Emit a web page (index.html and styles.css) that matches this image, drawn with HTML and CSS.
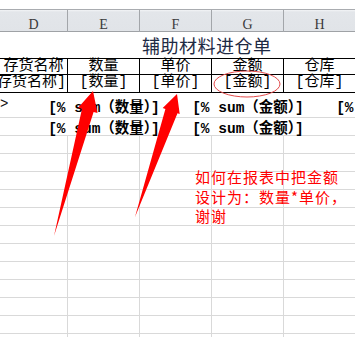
FILE: index.html
```html
<!DOCTYPE html>
<html lang="zh">
<head>
<meta charset="utf-8">
<title>辅助材料进仓单</title>
<link rel="stylesheet" href="styles.css">
</head>
<body>
<div class="sheet">
  <div class="topbar"></div>
  <div class="colhead">
    <div class="ch">D</div><div class="ch">E</div><div class="ch">F</div><div class="ch">G</div><div class="ch last">H</div>
  </div>
  <div class="title"><span class="title-text">辅助材料进仓单</span></div>
  <div class="trow r1">
    <div class="tc">存货名称</div><div class="tc">数量</div><div class="tc">单价</div><div class="tc">金额</div><div class="tc last">仓库</div>
  </div>
  <div class="trow r2">
    <div class="tc right">[存货名称]</div><div class="tc">[数量]</div><div class="tc">[单价]</div><div class="tc">[金额]</div><div class="tc last">[仓库]</div>
  </div>
  <div class="srow s1">
    <div class="gt">&gt;</div>
    <div class="sbox">[% sum（数量）]</div>
    <div class="sbox">[% sum（金额）]</div>
    <div class="sbox">[% sum（数量）]</div>
  </div>
  <div class="srow s2">
    <div class="gt"></div>
    <div class="sbox">[% sum（数量）]</div>
    <div class="sbox">[% sum（金额）]</div>
  </div>
  <div class="grow"><div class="gc"></div><div class="gc"></div><div class="gc"></div><div class="gc"></div><div class="gc last"></div></div>
  <div class="grow"><div class="gc"></div><div class="gc"></div><div class="gc"></div><div class="gc"></div><div class="gc last"></div></div>
  <div class="grow"><div class="gc"></div><div class="gc"></div><div class="gc"></div><div class="gc"></div><div class="gc last"></div></div>
  <div class="grow"><div class="gc"></div><div class="gc"></div><div class="gc"></div><div class="gc"></div><div class="gc last"></div></div>
  <div class="grow"><div class="gc"></div><div class="gc"></div><div class="gc"></div><div class="gc"></div><div class="gc last"></div></div>
  <div class="grow"><div class="gc"></div><div class="gc"></div><div class="gc"></div><div class="gc"></div><div class="gc last"></div></div>
  <div class="grow"><div class="gc"></div><div class="gc"></div><div class="gc"></div><div class="gc"></div><div class="gc last"></div></div>
  <div class="grow"><div class="gc"></div><div class="gc"></div><div class="gc"></div><div class="gc"></div><div class="gc last"></div></div>
  <div class="grow"><div class="gc"></div><div class="gc"></div><div class="gc"></div><div class="gc"></div><div class="gc last"></div></div>
  <div class="grow"><div class="gc"></div><div class="gc"></div><div class="gc"></div><div class="gc"></div><div class="gc last"></div></div>
  <div class="grow"><div class="gc"></div><div class="gc"></div><div class="gc"></div><div class="gc"></div><div class="gc last"></div></div>
  <div class="grow"><div class="gc"></div><div class="gc"></div><div class="gc"></div><div class="gc"></div><div class="gc last"></div></div>

  <svg class="marks" width="355" height="337" viewBox="0 0 355 337" xmlns="http://www.w3.org/2000/svg">
    <ellipse cx="247" cy="84" rx="33" ry="13" fill="none" stroke="#e24a4a" stroke-width="1"/>
    <polygon fill="#ff0000" points="54,236 82,108.7 78.1,107.7 93,91 97.5,112.9 93.6,111.9"/>
    <polygon fill="#ff0000" points="135,217 165.4,109 162.7,108.1 177,94 179.7,113.9 177.5,113.2"/>
  </svg>
  <div class="note">如何在报表中把金额<br>设计为：数量*单价，<br>谢谢</div>
</div>
</body>
</html>
```
FILE: styles.css
```css
html, body {
  margin: 0;
  padding: 0;
  background: #ffffff;
}
.sheet {
  position: relative;
  width: 355px;
  height: 337px;
  overflow: hidden;
  font-family: "Liberation Mono", "Noto Sans CJK SC", monospace;
  color: #000;
}
.topbar {
  height: 9px;
  background: #ffffff;
}
.colhead {
  display: grid;
  grid-template-columns: 68px 72px 72px 72px 71px;
  height: 23px;
  box-sizing: border-box;
  border-top: 1px solid #a9acb0;
  border-bottom: 1px solid #9fa2a6;
  background: linear-gradient(#f2f4f6 0, #e3e6ea 2px, #e1e4e8 100%);
}
.ch {
  box-sizing: border-box;
  border-right: 1px solid #a3a6aa;
  font-family: "Liberation Serif", serif;
  font-size: 14px;
  line-height: 14px;
  padding-top: 8px;
  text-align: center;
  color: #3a3a3a;
}
.ch.last { border-right: none; }
.title {
  height: 26px;
  display: flex;
  align-items: center;
  padding-left: 142px;
}
.title-text {
  font-family: "Noto Sans CJK SC", sans-serif;
  font-size: 18px;
  letter-spacing: 0.5px;
  line-height: 20px;
  color: #1e2a44;
}
.trow {
  display: grid;
  grid-template-columns: 68px 72px 72px 72px 71px;
  box-sizing: border-box;
  border-bottom: 1px solid #000;
}
.trow.r1 {
  border-top: 1px solid #000;
  height: 17px;
}
.trow.r2 {
  height: 18px;
}
.tc {
  box-sizing: border-box;
  border-right: 1px solid #000;
  font-size: 15px;
  line-height: 16px;
  text-align: center;
  white-space: nowrap;
  display: flex;
  justify-content: center;
  overflow: visible;
}
.tc.right {
  justify-content: flex-end;
  padding-right: 1px;
  overflow: hidden;
}
.tc.last { border-right: none; }
.srow {
  display: flex;
  box-sizing: border-box;
  border-bottom: 1px solid #d9d9d9;
}
.srow.s1 { height: 25px; }
.srow.s2 { height: 18px; }
.gt {
  flex: none;
  width: 32px;
  font-size: 14px;
  line-height: 23px;
  color: #111;
}
.sbox {
  flex: none;
  width: 144px;
  text-align: center;
  white-space: nowrap;
  font-weight: bold;
  font-size: 14.5px;
  display: flex;
  align-items: center;
  justify-content: center;
}
.grow {
  display: grid;
  grid-template-columns: 68px 72px 72px 72px 71px;
  height: 18px;
  box-sizing: border-box;
  border-bottom: 1px solid #d9d9d9;
}
.gc {
  border-right: 1px solid #d9d9d9;
}
.gc.last { border-right: none; }
.marks {
  position: absolute;
  left: 0;
  top: 0;
  pointer-events: none;
}
.note {
  position: absolute;
  left: 195px;
  top: 167px;
  font-family: "Noto Sans CJK SC", sans-serif;
  font-size: 15px;
  letter-spacing: 1px;
  line-height: 19.5px;
  color: #ff0000;
  white-space: nowrap;
}
```
